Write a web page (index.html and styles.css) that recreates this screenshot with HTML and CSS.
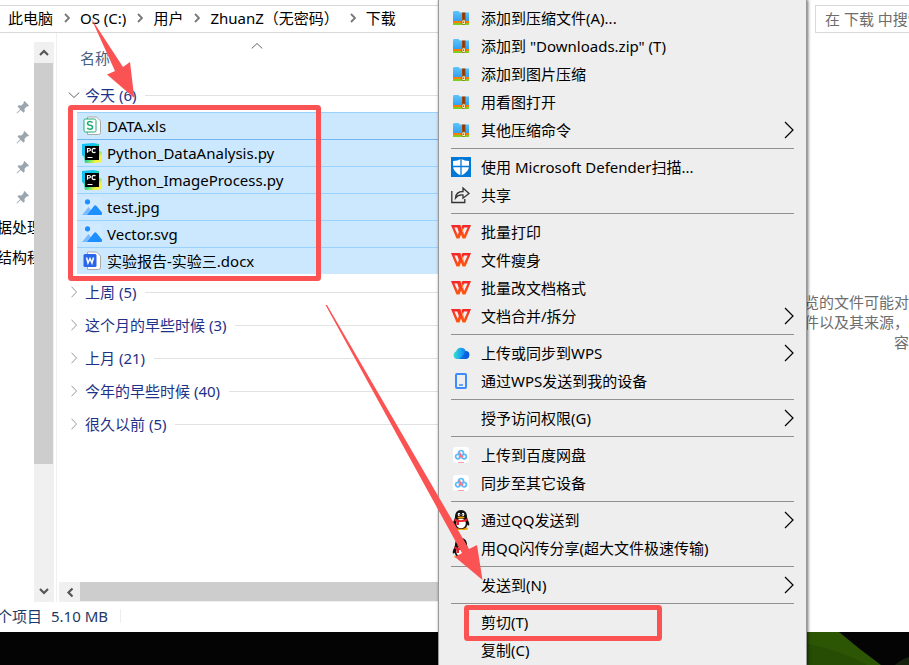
FILE: index.html
```html
<!DOCTYPE html>
<html lang="zh-CN">
<head>
<meta charset="utf-8">
<title>下载</title>
<link rel="stylesheet" href="styles.css">
</head>
<body>
<svg class="defs" aria-hidden="true">
  <defs>
    <linearGradient id="g-zip" x1="0" y1="0" x2="0" y2="1"><stop offset="0" stop-color="#5fc6fb"/><stop offset="1" stop-color="#2f9df0"/></linearGradient>
    <linearGradient id="g-wps" x1="0" y1="0" x2="0" y2="1"><stop offset="0" stop-color="#f5232d"/><stop offset="1" stop-color="#ff5a0c"/></linearGradient>
    <linearGradient id="g-cloud" x1="0" y1="0" x2="1" y2="0"><stop offset="0" stop-color="#35e0c8"/><stop offset=".5" stop-color="#18a0f5"/><stop offset="1" stop-color="#0a5ce0"/></linearGradient>
    <linearGradient id="g-pc" x1="0" y1="0" x2="1" y2="1"><stop offset="0.3" stop-color="#12c4f4"/><stop offset=".55" stop-color="#21d789"/><stop offset=".8" stop-color="#f6f23c"/></linearGradient>
    <symbol id="chev" viewBox="0 0 6 10"><path d="M1 1l4 4-4 4" fill="none" stroke="currentColor" stroke-width="1.8"/></symbol>
    <symbol id="thin" viewBox="0 0 6 12"><path d="M.5.7L5.500 6l-5 5.300" fill="none" stroke="currentColor"/></symbol>
    <symbol id="sub" viewBox="0 0 10 18"><path d="M1 1l8 8-8 8" fill="none" stroke="currentColor" stroke-width="1.200"/></symbol>
    <symbol id="arrow" viewBox="0 0 10 7"><path d="M1 6l4-4 4 4" fill="none" stroke="currentColor" stroke-width="2.200"/></symbol>
    <symbol id="pin" viewBox="0 0 14 14"><path d="M8.500 1l4.500 4.500-1 1-1-.2-2.500 2.500.2 2.700-1.200 1.200-2.800-2.800L1 13.500.5 13l3.700-3.800L1.500 6.500l1.200-1.200 2.700.2L7.800 3l-.3-1z" fill="#9aa5ae"/></symbol>
    <symbol id="zip" viewBox="0 0 16 14"><path d="M0 1.500Q0 0 1 0h4.500L7 1.500h9V11H0z" fill="url(#g-zip)"/><path d="M0 10h16v2H0z" fill="#ff7a00"/><path d="M0 12h16v1.500q0 .5-.5.500H.5Q0 14 0 13.500z" fill="#7fd01c"/><path d="M9 1.500h3.500V12H9z" fill="#a5480f"/><path d="M10 3h1.500M10 5h1.500M10 7h1.500" stroke="#6b2a05"/><rect x="9" y="9" width="3.500" height="4.500" rx="1" fill="#fff0c8" stroke="#9a6420" stroke-width=".8"/><path d="M10.700 10.500v1.500" stroke="#754812"/></symbol>
    <symbol id="defender" viewBox="0 0 20 20"><path d="M0 0h20v20H0z" fill="#0078d7"/><path d="M10 2q3.500 2 8 2v5q0 6-8 9.500Q2 15 2 9V4q4.500 0 8-2z" fill="#fff"/><path d="M10 1v18M1 9.500h18" stroke="#0078d7" stroke-width="1.300"/></symbol>
    <symbol id="share" viewBox="0 0 20 18"><path d="M.8 5v11.500h13V13M4.500 12q.5-6.500 7.500-6.500V2l6 5.500-6 4.700V9Q7 8.500 4.500 12z" fill="none" stroke="#333" stroke-width="1.300"/></symbol>
    <symbol id="wps" viewBox="0 0 20 14"><path fill-rule="evenodd" d="M0 0h9.500l.8 2.300L11 1l.5-1H20l-5.500 13.500h-3L10 9.500l-1.500 4h-3zM3.300 2.500l3.500 7.500 1-3-1.500-4.500zM13 2.500l-1.500 4 1.700 3.500L16.700 2.500z" fill="url(#g-wps)"/><path d="M9.500 0L13 9" stroke="#ff9b4a"/></symbol>
    <symbol id="cloud" viewBox="0 0 16 12"><path d="M4 12a4 4 0 0 1-.8-7.700A5 5 0 0 1 12.700 4 4 4 0 0 1 12 12z" fill="url(#g-cloud)"/><path d="M6 12q3-1 5-5 1-2.500 2-2.900A4 4 0 0 1 12 12z" fill="#0759db" opacity=".7"/></symbol>
    <symbol id="phone" viewBox="0 0 12 16"><rect x="1" y="1" width="10" height="14" rx="1" fill="none" stroke="#3b8cff" stroke-width="2"/><path d="M4 12h4" stroke="#3b8cff" stroke-width="1.500"/></symbol>
    <symbol id="baidu" viewBox="0 0 16 16"><rect width="16" height="16" rx="3" fill="#fff"/><g fill="none" stroke-width="1.700"><circle cx="8" cy="6" r="2.500" stroke="#57bdff"/><circle cx="4.900" cy="9.600" r="2.300" stroke="#57bdff"/><circle cx="11.100" cy="9.600" r="2.300" stroke="#57bdff"/><path d="M6 4.800Q8 9 10 10.500M6 10.500L8 8" stroke="#ff7584"/></g><path d="M5 15.500h6" stroke="#ff9da8"/></symbol>
    <symbol id="qq" viewBox="0 0 18 20"><ellipse cx="6" cy="18.500" rx="3.800" ry="1.500" fill="#f5a200"/><ellipse cx="12" cy="18.500" rx="3.800" ry="1.500" fill="#f5a200"/><path d="M9 0c4 0 6 3 6 7 0 2 2 4 2.300 7 .1 2-1.300 2-2 .6C15 18 12 19 9 19s-6-1-6.300-4.400C2 16 .6 16 .7 14 1 11 3 9 3 7c0-4 2-7 6-7z" fill="#111"/><ellipse cx="9" cy="13.500" rx="4.800" ry="4.800" fill="#fff"/><ellipse cx="7" cy="4.500" rx="1.300" ry="1.800" fill="#fff"/><ellipse cx="11" cy="4.500" rx="1.300" ry="1.800" fill="#fff"/><circle cx="7.300" cy="4.800" r=".6"/><circle cx="10.700" cy="4.800" r=".6"/><ellipse cx="9" cy="7.400" rx="3.500" ry="1" fill="#f5a200"/><path d="M2.800 8.500Q9 12 15.200 8.500l.5 2Q12 12.300 7 12v3H4.500v-3.700q-1.500-.4-2.200-.8z" fill="#e8202a"/></symbol>
    <symbol id="xls" viewBox="0 0 19 20"><path d="M5 1h9l4 4v11.500q0 2-2 2H5z" fill="#fff" stroke="#aaa"/><rect x="1.500" y="3" width="12" height="13" rx="1.500" fill="#fff" stroke="#22ac77"/><path d="M10 6.700Q9.500 5.500 7.500 5.500 5 5.500 5 7.300t2.500 2q2.600.2 2.600 2t-2.600 1.900q-2.200 0-2.700-1.400" fill="none" stroke="#22ac77" stroke-width="1.500"/></symbol>
    <symbol id="doc" viewBox="0 0 19 20"><path d="M5 1h9l4 4v11.500q0 2-2 2H5z" fill="#fff" stroke="#aaa"/><rect x="1" y="3" width="13" height="13" rx="1.500" fill="#2a66ea"/><path d="M4 6.500l1.500 5.500 2-4.500L9.500 12 11 6.500" fill="none" stroke="#fff" stroke-width="1.500"/></symbol>
    <symbol id="py" viewBox="0 0 20 20"><path d="M0 1l11-1 6 1v7l3 1v10l-7 1H3l-1-6-2-2z" fill="url(#g-pc)"/><path d="M3 3h14v14H3z" fill="#000"/><path d="M5.500 9.800V5.500h1.600q1.400 0 1.400 1.200T7.100 8H5.500M13.500 6q-.6-.6-1.500-.6-1.900 0-1.900 2.100t1.900 2.100q.9 0 1.500-.6M5.500 14.500h5" fill="none" stroke="#fff" stroke-width="1.200"/></symbol>
    <symbol id="img" viewBox="0 0 20 20"><path d="M0 0h20v20H0z" fill="#d2eaff"/><circle cx="5.500" cy="4.800" r="2.600" fill="#1e8fff"/><path d="M0 18l6.500-8 6 8z" fill="#79bbff"/><path d="M5 18l7-9q1.300-1.500 2.500 0l5.500 6.500V17q0 1-1 1z" fill="#1e8fff"/></symbol>
  </defs>
</svg>

<main class="window">
  <header class="toolbar">
    <nav class="crumbs" aria-label="路径">
      <a href="#">此电脑</a><svg><use href="#chev"/></svg>
      <a href="#">OS (C:)</a><svg><use href="#chev"/></svg>
      <a href="#">用户</a><svg><use href="#chev"/></svg>
      <a href="#">ZhuanZ（无密码）</a><svg><use href="#chev"/></svg>
      <a href="#">下载</a>
    </nav>
    <input class="search" type="text" aria-label="搜索" placeholder="在 下载 中搜索">
  </header>

  <div class="body">
    <aside class="nav">
      <svg class="pin"><use href="#pin"/></svg>
      <svg class="pin"><use href="#pin"/></svg>
      <svg class="pin"><use href="#pin"/></svg>
      <svg class="pin"><use href="#pin"/></svg>
      <div class="places">
        <a href="#">据处理</a>
        <a href="#">结构程</a>
      </div>
    </aside>
    <div class="vbar">
      <button aria-label="向上"><svg><use href="#arrow"/></svg></button>
      <div class="vthumb"></div>
      <button class="down" aria-label="向下"><svg><use href="#arrow"/></svg></button>
    </div>
    <section class="files">
      <div class="head"><button>名称</button><svg><use href="#thin"/></svg></div>
      <h2 class="group open"><svg><use href="#thin"/></svg>今天 (6)</h2>
      <ul class="rows">
        <li><svg><use href="#xls"/></svg>DATA.xls</li>
        <li><svg><use href="#py"/></svg>Python_DataAnalysis.py</li>
        <li><svg><use href="#py"/></svg>Python_ImageProcess.py</li>
        <li><svg><use href="#img"/></svg>test.jpg</li>
        <li><svg><use href="#img"/></svg>Vector.svg</li>
        <li><svg><use href="#doc"/></svg>实验报告-实验三.docx</li>
      </ul>
      <h2 class="group"><svg><use href="#thin"/></svg>上周 (5)</h2>
      <h2 class="group"><svg><use href="#thin"/></svg>这个月的早些时候 (3)</h2>
      <h2 class="group"><svg><use href="#thin"/></svg>上月 (21)</h2>
      <h2 class="group"><svg><use href="#thin"/></svg>今年的早些时候 (40)</h2>
      <h2 class="group"><svg><use href="#thin"/></svg>很久以前 (5)</h2>
      <div class="hbar">
        <button aria-label="向左"><svg><use href="#arrow"/></svg></button>
        <div class="hthumb"></div>
      </div>
    </section>
    <p class="preview">览的文件可能对<br>件以及其来源，<br>容</p>
  </div>

  <footer class="status"><span>个项目</span><span class="size">5.10 MB</span></footer>
</main>

<div class="desktop">
  <svg class="leaf" viewBox="0 0 102 33" preserveAspectRatio="none"><path d="M0 0h32q20 17 42 33H0z" fill="#2c5504"/><path d="M0 12q30 5 60 21H0z" fill="#264d03"/><path d="M88 33q8-7 14-8v8z" fill="#15200d"/></svg>
</div>

<div class="menu" role="menu">
  <button role="menuitem"><svg class="zip"><use href="#zip"/></svg>添加到压缩文件(A)...</button>
  <button role="menuitem"><svg class="zip"><use href="#zip"/></svg>添加到 "Downloads.zip" (T)</button>
  <button role="menuitem"><svg class="zip"><use href="#zip"/></svg>添加到图片压缩</button>
  <button role="menuitem"><svg class="zip"><use href="#zip"/></svg>用看图打开</button>
  <button role="menuitem"><svg class="zip"><use href="#zip"/></svg>其他压缩命令<svg class="sub"><use href="#sub"/></svg></button>
  <hr>
  <button role="menuitem"><svg class="big"><use href="#defender"/></svg>使用 Microsoft Defender扫描...</button>
  <button role="menuitem"><svg class="big"><use href="#share"/></svg>共享</button>
  <hr>
  <button role="menuitem"><svg class="wps"><use href="#wps"/></svg>批量打印</button>
  <button role="menuitem"><svg class="wps"><use href="#wps"/></svg>文件瘦身</button>
  <button role="menuitem"><svg class="wps"><use href="#wps"/></svg>批量改文档格式</button>
  <button role="menuitem"><svg class="wps"><use href="#wps"/></svg>文档合并/拆分<svg class="sub"><use href="#sub"/></svg></button>
  <hr>
  <button role="menuitem"><svg class="cloud"><use href="#cloud"/></svg>上传或同步到WPS<svg class="sub"><use href="#sub"/></svg></button>
  <button role="menuitem"><svg class="mid"><use href="#phone"/></svg>通过WPS发送到我的设备</button>
  <hr>
  <button role="menuitem"><span></span>授予访问权限(G)<svg class="sub"><use href="#sub"/></svg></button>
  <hr>
  <button role="menuitem"><svg class="mid"><use href="#baidu"/></svg>上传到百度网盘</button>
  <button role="menuitem"><svg class="mid"><use href="#baidu"/></svg>同步至其它设备</button>
  <hr>
  <button role="menuitem"><svg class="big"><use href="#qq"/></svg>通过QQ发送到<svg class="sub"><use href="#sub"/></svg></button>
  <button role="menuitem"><svg class="big"><use href="#qq"/></svg>用QQ闪传分享(超大文件极速传输)</button>
  <hr>
  <button role="menuitem"><span></span>发送到(N)<svg class="sub"><use href="#sub"/></svg></button>
  <hr>
  <button role="menuitem"><span></span>剪切(T)</button>
  <button role="menuitem"><span></span>复制(C)</button>
</div>

<svg class="marks" viewBox="0 0 909 665" aria-hidden="true">
  <g fill="none" stroke="#fb5353" stroke-width="5"><rect x="70.500" y="107.500" width="248" height="171" rx="1"/><rect x="466.500" y="607.500" width="193" height="31" rx="1"/></g>
  <g fill="#fb5353"><path d="M91 18l32 49 7-5 4.300 36L107 74.500l8-3.500z"/><path d="M325.500 305h1.500L469 549l8-4 5.500 35L455 557l7-4z"/></g>
</svg>
</body>
</html>
```
FILE: styles.css
```css
* { box-sizing: border-box; }
body {
  margin: 0;
  height: 100vh;
  display: flex;
  flex-direction: column;
  overflow: hidden;
  position: relative;
  background: #fff;
  color: #000;
  font: 15px/20px "Noto Sans", "Noto Sans CJK SC", sans-serif;
}
svg { flex: none; display: block; }
.defs { position: absolute; width: 0; height: 0; }
button { border: 0; padding: 0; background: none; font: inherit; color: inherit; }
a { color: inherit; text-decoration: none; }

.window { flex: 1; min-height: 0; display: flex; flex-direction: column; background: #fff; }
.toolbar { display: flex; gap: 8px; height: 28px; margin-top: 5px; }
.crumbs {
  flex: 1;
  display: flex;
  align-items: center;
  gap: 11px;
  padding: 0 8px 2px;
  border: solid #d9d9d9;
  border-width: 1px 0;
  white-space: nowrap;
}
.crumbs svg { width: 6px; height: 10px; margin-right: -1px; color: #777; }
.search {
  width: 94px;
  border: 1px solid #d9d9d9;
  border-right: 0;
  border-radius: 0;
  padding: 0 0 0 9px;
  font: inherit;
  background: #fff;
  appearance: none;
}
.search::placeholder { color: #6d6d6d; opacity: 1; }

.body { flex: 1; min-height: 0; display: flex; }
.nav { width: 34px; overflow: hidden; padding-top: 59px; white-space: nowrap; }
.pin { width: 14px; height: 14px; margin: 8px 0 16px 16px; }
.places { margin: -8px 0 0 -3px; }
.places a { display: block; line-height: 30px; }

.vbar { width: 20px; margin-top: 9px; background: #f0f0f0; display: flex; flex-direction: column; color: #555; }
.vbar button { height: 21px; display: grid; place-items: center; }
.vbar svg, .hbar svg { width: 10px; height: 7px; }
.vthumb { height: 401px; margin-right: 1px; background: #cdcdcd; }
.vbar .down { margin-top: auto; }
.down svg { transform: rotate(180deg); }

.files { flex: 1; margin-left: 2px; border-left: 1px solid #f0f0f0; display: flex; flex-direction: column; }
.head { display: flex; height: 46px; padding: 4px 0 0 23px; align-items: center; color: #44607f; }
.head svg { width: 6px; height: 12px; margin: -25px 0 0 144px; transform: rotate(-90deg); color: #666; }
.group {
  display: flex;
  align-items: center;
  height: 33px;
  margin: 0;
  padding: 0 0 2px 14px;
  font-size: 15px;
  font-weight: 400;
  color: #1e3287;
}
.group::after { content: ""; flex: 1; height: 1px; margin: 2px 0 0 9px; background: #e2e2e2; }
.group svg { width: 6px; height: 12px; margin-right: 8px; color: #999; }
.group.open svg { transform: rotate(90deg); color: #666; }
.rows { list-style: none; margin: 0 0 2px 20px; padding: 0; }
.rows li {
  display: flex;
  align-items: center;
  gap: 5px;
  height: 27px;
  padding-left: 5px;
  background: #cce8ff;
  border-top: 1px solid #99d1ff;
}
.rows li:nth-child(2) { border-color: #70b7f2; }
.rows svg { width: 20px; height: 20px; }
.hbar { height: 20px; margin: auto 0 0 2px; display: flex; background: #f0f0f0; color: #555; }
.hbar button { width: 21px; display: grid; place-items: center; }
.hbar svg { transform: rotate(-90deg); }
.hthumb { flex: 1; margin-bottom: 1px; background: #cdcdcd; }
.preview { width: 105px; margin: 259px 0 0; text-align: right; white-space: nowrap; color: #6d6d6d; }

.status { height: 30px; display: flex; align-items: center; gap: 9px; margin-left: -3px; padding-bottom: 2px; color: #1e3a66; }
.size { padding-right: 12px; line-height: 14px; border-right: 1px solid #eee; }
.desktop { height: 33px; background: #040404; display: flex; justify-content: flex-end; }
.leaf { width: 102px; height: 33px; }

.menu {
  position: absolute;
  left: 438px;
  top: 0;
  bottom: 0;
  width: 369px;
  padding: 4px 12px;
  overflow: hidden;
  background: #eee;
  border: solid #999;
  border-width: 0 1px;
  box-shadow: 1px 0 3px rgba(0, 0, 0, .6);
}
.menu button { display: flex; align-items: center; width: 100%; height: 28px; white-space: nowrap; }
.menu button > :first-child { width: 20px; margin-right: 10px; flex: none; }
.menu .zip { height: 14px; }
.menu .big { height: 20px; }
.menu .wps { height: 14px; }
.menu .cloud { height: 12px; }
.menu .mid { height: 16px; }
.menu .sub { width: 10px; height: 18px; margin-left: auto; }
.menu hr { margin: 4px 0; border: 0; height: 1px; background: #919191; }

.marks { position: absolute; left: 0; top: 0; width: 909px; height: 665px; pointer-events: none; }
```
